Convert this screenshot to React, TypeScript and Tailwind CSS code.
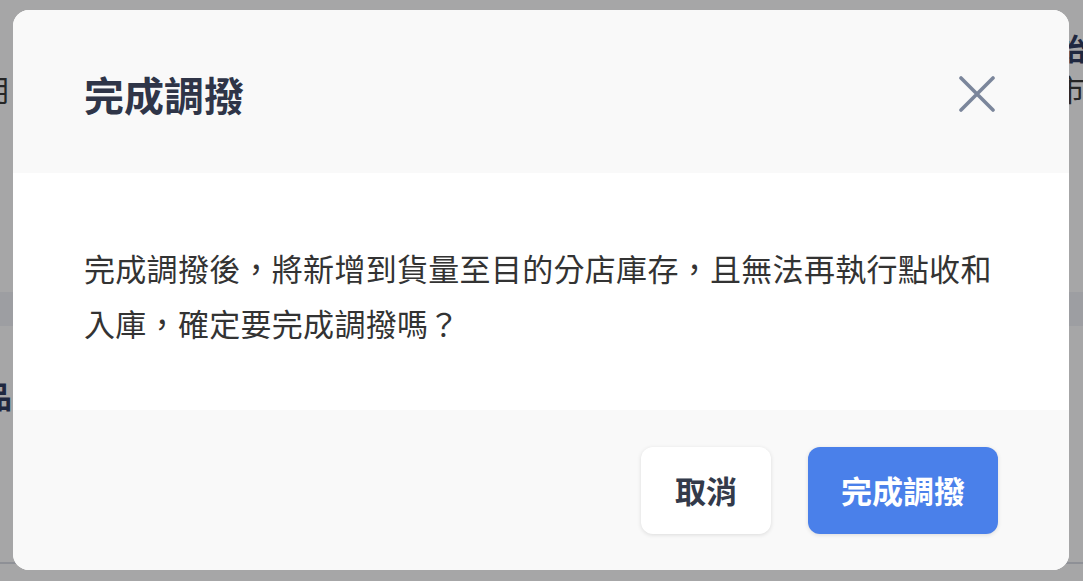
import React from 'react';

const CloseIcon: React.FC = () => (
    <svg width="36" height="36" viewBox="0 0 36 36" fill="none" className="mr-[3px] shrink-0">
        <path d="M2 2L34 34M34 2L2 34" stroke="#7b869b" strokeWidth="3.6" strokeLinecap="round" />
    </svg>
);

const App: React.FC = () => {
    return (
        <div className="relative h-[581px] w-[1083px] overflow-hidden bg-[#a6a6a7] font-['Noto_Sans_CJK_TC','Noto_Sans',sans-serif]">
            {/* page behind the overlay */}
            <div className="flex flex-col">
                <div className="flex h-[62px] items-end justify-end">
                    <span className="mr-[-3px] text-[30px] leading-none font-bold text-[#1f2840]">始</span>
                </div>
                <div className="flex h-[52px] items-center justify-between">
                    <span className="ml-[-20px] text-[30px] leading-none text-[#262626]">用</span>
                    <span className="mr-[-2px] text-[30px] leading-none text-[#262626]">市</span>
                </div>
                <div className="h-[178px]" />
                <div className="h-[34px] bg-[#9d9ea2]" />
                <div className="flex h-[84px] items-end">
                    <span className="ml-[-18px] text-[30px] leading-none font-bold text-[#1f2840]">品</span>
                </div>
                <div className="h-[152px]" />
                <div className="h-[2px] bg-[#8e9096]" />
            </div>

            {/* modal */}
            <div className="absolute left-[13px] top-[10px] flex h-[560px] w-[1056px] flex-col overflow-hidden rounded-[16px] bg-white">
                <div className="flex h-[163px] items-center bg-[#f9f9f9] px-[71px] pt-[4px]">
                    <h2 className="text-[40px] leading-none font-bold text-[#2f3548]">完成調撥</h2>
                    <div className="ml-auto">
                        <CloseIcon />
                    </div>
                </div>
                <div className="h-[237px] bg-white pl-[71px] pr-[50px] pt-[67px]">
                    <p className="text-[31px] leading-[55px] tracking-[0.3px] text-[#333333]">
                        完成調撥後，將新增到貨量至目的分店庫存，且無法再執行點收和入庫，確定要完成調撥嗎？
                    </p>
                </div>
                <div className="flex flex-1 items-start justify-end gap-[37px] bg-[#f9f9f9] px-[71px] pt-[37px]">
                    <button className="flex h-[87px] w-[130px] items-center justify-center rounded-[12px] bg-white text-[31px] font-bold text-[#333a4a] shadow-[0_1px_4px_rgba(0,0,0,0.12)]">
                        取消
                    </button>
                    <button className="flex h-[87px] w-[190px] items-center justify-center rounded-[12px] bg-[#4a80ea] text-[31px] font-bold text-white shadow-[0_1px_4px_rgba(0,0,0,0.12)]">
                        完成調撥
                    </button>
                </div>
            </div>
        </div>
    );
};

export default App;
